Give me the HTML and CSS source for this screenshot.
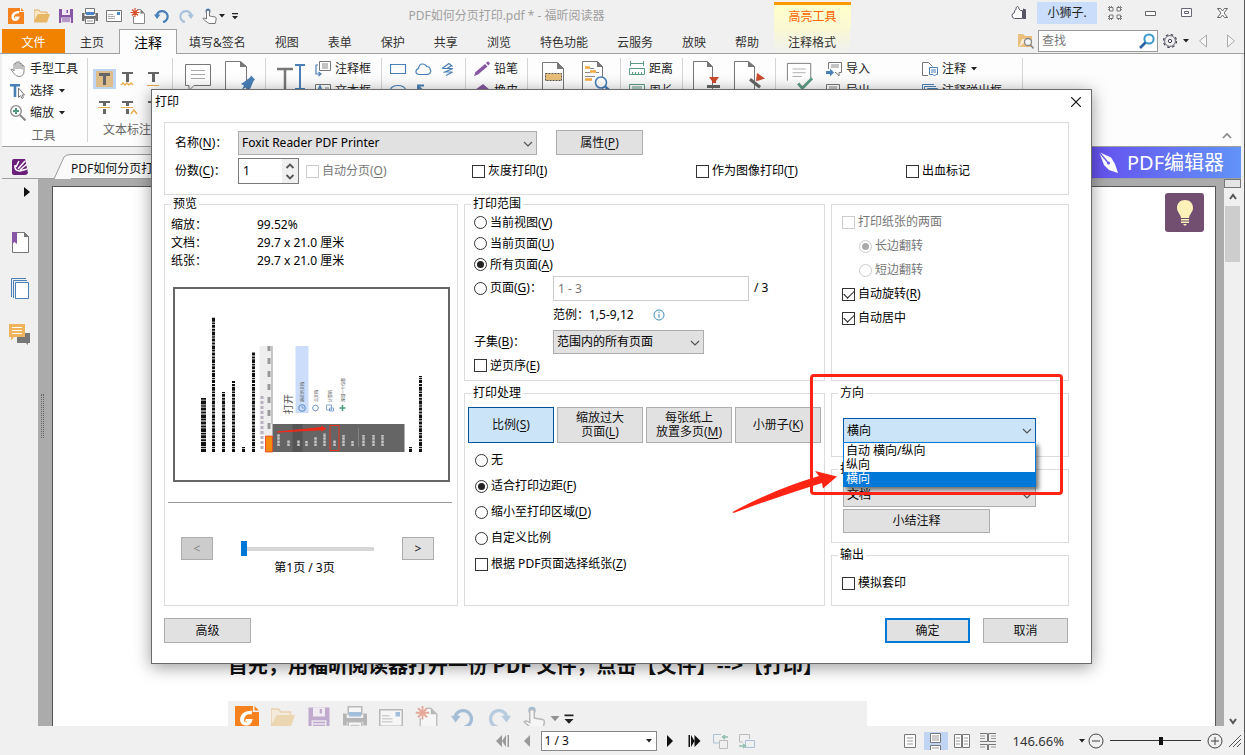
FILE: index.html
```html
<!DOCTYPE html>
<html lang="zh-CN">
<head>
<meta charset="utf-8">
<title>PDF如何分页打印.pdf * - 福昕阅读器</title>
<link rel="stylesheet" href="styles.css">
</head>
<body>
<svg class="defs" aria-hidden="true">
  <symbol id="i-logo" viewBox="0 0 16 16"><path d="M0 0h12v4h4v12H0z" fill="#f5821f"/><path d="M13 0l3 3h-3z" fill="#f5821f"/><path d="M11.6 3.2C7 2.600 3.400 5.200 3.400 9c0 2.500 1.600 4 4 4 2.200 0 3.800-1.400 4.400-4.400H7.200L6.600 10.400h1.800c-1.600 1-2.700.2-2.300-1.800C6.600 6 8.400 5 11 5.600z" fill="#fff"/></symbol>
  <symbol id="i-folder" viewBox="0 0 16 16"><path d="M0 14V2h5l1.500 2H13v3H4z" fill="#fbe6c4" stroke="#dfae62"/><path d="M0 14.500L4 6h12l-3 8.500z" fill="#e8b765"/></symbol>
  <symbol id="i-save" viewBox="0 0 16 16"><path d="M1 1h14v14H1z" fill="#8757a3"/><path d="M4 1h8v6H4z" fill="#f0e8f5"/><path d="M8.500 2H10v3H8.500z" fill="#8757a3"/><path d="M3 9.500h10V15H3z" fill="#fff" opacity=".8"/><path d="M4 11h8M4 13h8" stroke="#8757a3"/></symbol>
  <symbol id="i-print" viewBox="0 0 16 16"><path d="M3.500 6V.5h9V6" fill="#fff" stroke="#777"/><path d="M0 5h2.500v3h11V5H16v8h-2.500v-2.500h-11V13H0z" fill="#6f6f6f"/><path d="M4 4h8v3H4z" fill="#4a86c5"/><path d="M3.500 10.500h9v5h-9z" fill="#fff" stroke="#777"/><path d="M5 13h6" stroke="#999"/></symbol>
  <symbol id="i-mail" viewBox="0 0 16 16"><path d="M.5 2.500h15v11H.5z" fill="#fff" stroke="#777"/><path d="M2 6.500h5M2 8.500h7M2 10.500h7" stroke="#aaa"/><path d="M11 4h3v3h-3z" fill="#4a86c5"/></symbol>
  <symbol id="i-new" viewBox="0 0 16 16"><path d="M3.500 8v7.500h11v-10l-4-4H8" fill="#fff" stroke="#888"/><path d="M10.500 1.500v4h4z" fill="#777"/><path d="M5 0v9M.5 4.500h9M2 1.500l6 6M8 1.500l-6 6" stroke="#d8512f" stroke-width="1.200"/></symbol>
  <symbol id="i-undo" viewBox="0 0 16 16"><path d="M3 9V6.500A5.500 5.500 0 1 1 9 14" fill="none" stroke="#4a80b8" stroke-width="2.200"/><path d="M0 6.500h6.500L3 11z" fill="#4a80b8"/></symbol>
  <symbol id="i-redo" viewBox="0 0 16 16"><path d="M13 9V6.500A5.500 5.500 0 1 0 7 14" fill="none" stroke="#a9c2dc" stroke-width="2.200"/><path d="M16 6.500H9.500L13 11z" fill="#a9c2dc"/></symbol>
  <symbol id="i-touch" viewBox="0 0 16 16"><circle cx="6" cy="3" r="2.500" fill="#4a80b8"/><path d="M4.500 11V3q1.500-1.500 3 0v5l5.500 1q1.500.3 1.200 2l-1 4.500h-6L3.500 13 .8 10.500q1-1.200 3.700.5z" fill="#fff" stroke="#777"/></symbol>
  <symbol id="i-caret" viewBox="0 0 8 8"><path d="M1 2h6L4 5.500z" fill="#222"/></symbol>
  <symbol id="i-more" viewBox="0 0 8 8"><path d="M1 1h6v1.200H1zM1 4h6L4 7.200z" fill="#222"/></symbol>
  <symbol id="i-chevron" viewBox="0 0 10 10"><path d="M1 3l4 4 4-4" fill="none" stroke="#555" stroke-width="1.200"/></symbol>
  <symbol id="i-page" viewBox="0 0 24 30"><path d="M1.500 29V1.500h15l6 6V29" fill="#fdfdfd" stroke="#777"/><path d="M16 1v7h7z" fill="#777"/></symbol>
</svg>

<div class="app">
  <header class="titlebar">
    <nav class="quick" aria-label="快速访问">
      <svg class="ic quick-logo"><use href="#i-logo"/></svg>
      <svg class="ic"><use href="#i-folder"/></svg>
      <svg class="ic"><use href="#i-save"/></svg>
      <svg class="ic"><use href="#i-print"/></svg>
      <svg class="ic"><use href="#i-mail"/></svg>
      <svg class="ic"><use href="#i-new"/></svg>
      <svg class="ic"><use href="#i-undo"/></svg>
      <svg class="ic"><use href="#i-redo"/></svg>
      <svg class="ic"><use href="#i-touch"/></svg>
      <svg class="ic-s"><use href="#i-caret"/></svg>
      <svg class="ic-s quick-more"><use href="#i-more"/></svg>
    </nav>
    <div class="doc-title">PDF如何分页打印.pdf * - 福昕阅读器</div>
    <div class="context-title">高亮工具</div>
    <div class="window-tools">
      <svg class="ic" viewBox="0 0 16 16"><path d="M11.500 5.500v8H3.500q-2.500-.5-2.500-3 0-2.300 2.500-2.800Q3 5 5 4.500 4.500 2 6.500 1.500 8 2 8 4l1.500 1.500z" fill="#fff" stroke="#556"/><path d="M12 3.500l3 1V14h-3z" fill="#556"/></svg>
      <button class="user">小狮子.</button>
      <svg class="ic" viewBox="0 0 16 16" fill="none" stroke="#777"><path d="M2.500 6V2.500H6V6zM10 6V2.500h3.500V6zM2.500 13.500V10H6v3.500zM10 13.500V10h3.500v3.500z"/><path d="M1.500 5V1.500H5M11 1.500h3.500V5M1.500 11v3.500H5M11 14.500h3.500V11" stroke-dasharray="1 1"/></svg>
      <svg class="ic win-first" viewBox="0 0 16 16"><path d="M2.500 6.500h10v4h-10z" fill="#fff" stroke="#666"/></svg>
      <svg class="ic win" viewBox="0 0 16 16"><path d="M2.500 3.500h10v8h-10z" fill="#fff" stroke="#667"/><path d="M5.500 6.500h4v2h-4z" fill="none" stroke="#667"/></svg>
      <svg class="ic win" viewBox="0 0 16 16"><path d="M2.500 3.500h3l2 2.500 2-2.500h3L9 8l3.500 4.500h-3L7.500 10l-2 2.500h-3L6 8z" fill="#fff" stroke="#666"/></svg>
    </div>
  </header>

  <div class="tabs">
    <button class="tab tab-file">文件</button>
    <button class="tab">主页</button>
    <button class="tab tab-active">注释</button>
    <button class="tab tab-after">填写&amp;签名</button>
    <button class="tab">视图</button>
    <button class="tab">表单</button>
    <button class="tab">保护</button>
    <button class="tab">共享</button>
    <button class="tab">浏览</button>
    <button class="tab">特色功能</button>
    <button class="tab">云服务</button>
    <button class="tab">放映</button>
    <button class="tab">帮助</button>
    <button class="tab tab-context">注释格式</button>
    <div class="search-area">
      <svg class="ic" viewBox="0 0 16 16"><path d="M0 1h5l2 2h7v11H0z" fill="#eabf7c"/><path d="M1 14L4 6h7" fill="#fff" opacity=".7"/><circle cx="10" cy="9" r="3.500" fill="#f5f5f5" stroke="#888" stroke-width="1.300"/><path d="M12.500 12l3 3.500" stroke="#888" stroke-width="1.600"/></svg>
      <div class="search">
        <input type="text" aria-label="查找" placeholder="查找">
        <svg class="ic" viewBox="0 0 16 16"><circle cx="10" cy="6" r="4.600" fill="#fff" stroke="#3c9ac8" stroke-width="2"/><path d="M6.500 9.500L1 15" stroke="#2d62a3" stroke-width="2.600"/></svg>
      </div>
      <svg class="ic" viewBox="0 0 16 16" fill="none" stroke="#445"><circle cx="8" cy="8" r="6.500" stroke-width="1.200" stroke-dasharray="2.600 2.500"/><circle cx="8" cy="8" r="5.400" stroke-width=".8"/><circle cx="8" cy="8" r="1.700"/></svg>
      <svg class="ic-s"><use href="#i-caret"/></svg>
      <svg class="step" viewBox="0 0 10 16"><path d="M8.500 2v12L1.500 8z" fill="#f8f8f8" stroke="#aaa"/></svg>
      <svg class="step step-next" viewBox="0 0 10 16"><path d="M1.500 2v12l7-6z" fill="#f8f8f8" stroke="#aaa"/></svg>
    </div>
  </div>

  <section class="ribbon" aria-label="注释">
    <div class="rgroup g-tools">
      <div class="rrow"><svg class="ic" viewBox="0 0 16 16"><path d="M4 10V3q1-1 2 0V1.500q1-1.300 2 0V1q1.200-1 2 .5V3q1-1 2 0v2q1-1 2 0v5q0 5.500-5 5.500-3 0-5-3L1 8.500q1-1.500 3 1.500zM6 3v5M8 1.500V8M10 2v6M12 4v4.500" fill="#fff" stroke="#888"/></svg>手型工具</div>
      <div class="rrow"><svg class="ic" viewBox="0 0 16 16"><path d="M0 1h10v2.500H6.300V14H3.700V3.500H0z" fill="#4a80b8"/><path d="M8.500 5v9.500l2-2 1.500 3 1.500-1-1.500-2.500h2.500z" fill="#fff" stroke="#777"/></svg>选择<svg class="ic-s"><use href="#i-caret"/></svg></div>
      <div class="rrow"><svg class="ic" viewBox="0 0 16 16"><circle cx="6" cy="6" r="5.300" fill="#fff" stroke="#888" stroke-width="1.300"/><path d="M6 3v6M3 6h6" stroke="#4d9a7e" stroke-width="2"/><path d="M10 10l5.500 5.500" stroke="#888" stroke-width="2"/></svg>缩放<svg class="ic-s"><use href="#i-caret"/></svg></div>
      <div class="rlabel">工具</div>
    </div>
    <div class="rgroup g-text">
      <svg class="text-tools" viewBox="0 0 78 54"><path d="M0 0h23v20H0z" fill="#bfd3f2"/><path d="M3 2h17v16H3z" fill="#dfbd8b"/><path d="M6 4h11v3h-4v9h-3V7H6zM29 3h11v2h-4v8h-3V5h-4zM55 3h11v2h-4v8h-3V5h-4zM6 32h11v2h-4v3h-3v-3H6zM10 40h3v5h-3zM29 32h11v2h-4v3h-3v-3h-4zM33 40h3v5h-3zM55 32h11v2h-4v10h-3V34h-4z" fill="#666"/><path d="M54 16.500h12M5 38.500h12M28 38.500h12" stroke="#e8ad50" stroke-width="1.200"/><path d="M28 16l2-2 2 2 2-2 2 2 2-2 2 2M38 45l3-4 3 4" fill="none" stroke="#e8ad50" stroke-width="1.400"/></svg>
      <div class="rlabel">文本标注</div>
    </div>
    <div class="rgroup g-pair">
      <svg class="big" viewBox="0 0 28 30"><path d="M1.500 3.500h25v21H10l-5 5v-5H1.500z" fill="#fff" stroke="#777"/><path d="M7 9.500h14M7 13.500h14M7 17.500h14" stroke="#aaa"/></svg>
      <svg class="big big-2" viewBox="0 0 30 30"><path d="M.5 29V.5h15l6 5V29" fill="#fff" stroke="#777"/><path d="M15 0v6h7z" fill="#777"/><path d="M16 23l3-2 6-4.500 1-2 4 4-1.500 1.500-3 7-1.500 2.500-3-3-4 2 2-4z" fill="#4a80b8"/></svg>
    </div>
    <div class="rgroup g-type">
      <svg class="big" viewBox="0 0 30 30"><path d="M1 8h16M9 8v22" stroke="#777" stroke-width="2.500" fill="none"/><path d="M19 4h10M24 4v23M19 28h10" stroke="#4a80b8" stroke-width="2" fill="none"/></svg>
      <div class="rstack">
        <div class="rrow"><svg class="ic" viewBox="0 0 16 16"><path d="M4.500 .5h11v9h-11z" fill="#fff" stroke="#777"/><path d="M7 3h6M7 5h6M7 7h6" stroke="#888"/><path d="M3 4H1v9h4M3.500 11l2.500 2-2.500 2" fill="none" stroke="#4a80b8" stroke-width="1.200"/></svg>注释框</div>
        <div class="rrow"><svg class="ic" viewBox="0 0 16 16"><path d="M.5 1.500h15v13H.5z" fill="#fff" stroke="#777"/><path d="M2 10l3-7 3 7M3 8h4" stroke="#4a80b8" stroke-width="1.600" fill="none"/><path d="M10 5h4M10 7h4" stroke="#888"/></svg>文本框</div>
      </div>
    </div>
    <div class="rgroup g-shape">
      <svg class="shapes" viewBox="0 0 66 32" fill="none" stroke="#4a80b8" stroke-width="1.200"><path d="M.5 1.500h15v9H.5z"/><path d="M29 11.500q-3.500-.5-3-3.500.5-2 2.500-2.300Q29 1 32.500 1q3 0 4 2.500 3.500 0 3.500 2.500 2 3-1 5-1.500.5-2.500.5z"/><path d="M52 5.500L59 .5 62.500 3.500M52 5.500h11L53.500 9.500M55 9h7.500L56 12.500M57 5.500L61 3"/><ellipse cx="8" cy="27" rx="7.500" ry="4.500"/><path d="M27 22.500h7M28 22v6M28 23l7 7" stroke-width="2"/></svg>
    </div>
    <div class="rgroup g-pen">
      <div class="rstack">
        <div class="rrow"><svg class="ic" viewBox="0 0 16 16"><path d="M0 15l1.500-4L11 3l2.500 2.500L4 13.500zM12 2l2-1.700 2 2L14.500 4.500z" fill="#8757a3"/></svg>铅笔</div>
        <div class="rrow"><svg class="ic" viewBox="0 0 16 16"><path d="M1 7l8-6 7 6-7 8z" fill="#8757a3"/></svg>橡皮</div>
      </div>
    </div>
    <div class="rgroup g-pair">
      <svg class="big" viewBox="0 0 24 30"><use href="#i-page"/><path d="M4.500 12.500h16v7h-16z" fill="#e8bf78" stroke="#555" stroke-dasharray="2 1"/></svg>
      <svg class="big big-3" viewBox="0 0 28 30"><path d="M.5 29V.5h15l5 5V29" fill="#fff" stroke="#777"/><path d="M15 0v6h6z" fill="#777"/><path d="M3 6.500h5M8 10.500h6M3 18.500h7" stroke="#f0a840" stroke-width="2.500"/><path d="M8 7.500h4M3 11.500h5M14 11.500h3M3 15.500h10" stroke="#888"/><circle cx="19" cy="21.500" r="5.500" fill="#fff" stroke="#4a80b8" stroke-width="1.600"/><path d="M23 25.500l5 4.500" stroke="#4a80b8" stroke-width="2.500"/></svg>
    </div>
    <div class="rgroup g-measure">
      <div class="rstack">
        <div class="rrow"><svg class="ic" viewBox="0 0 16 16" fill="none" stroke="#5d9b83"><path d="M1.500 0v5M14.500 0v5M2 2.500h12M.5 7.500h15v6H.5zM3.500 11v2M6.500 11v2M9.500 11v2M12.500 11v2"/></svg>距离</div>
        <div class="rrow"><svg class="ic" viewBox="0 0 16 16" fill="none" stroke="#5d9b83"><path d="M.5 1.500h15v13H.5zM3 4h10M3 6h10"/></svg>周长</div>
      </div>
    </div>
    <div class="rgroup g-stamp">
      <svg class="big" viewBox="0 0 28 30"><path d="M1.500 29V.5h14l5 5V29" fill="#fff" stroke="#777"/><path d="M15 0v6h6z" fill="#777"/><path d="M17 16h10l-3 4v2h-4v-2z" fill="#cc4a2c"/><path d="M15 24h13v3H15z" fill="#666"/><path d="M15 28.500h13V30H15z" fill="#cc4a2c"/></svg>
      <svg class="big big-4" viewBox="0 0 32 30"><path d="M1.500 29V.5h14l6 5V29" fill="#fff" stroke="#777"/><path d="M15 0v6h7z" fill="#777"/><path d="M24 12l8 5.500-6 2-3 .5z" fill="#cc4a2c"/><path d="M18 17l10 8-2 2.500-10-8z" fill="#666"/><path d="M15 28.500h13V30H15z" fill="#cc4a2c"/></svg>
    </div>
    <div class="rgroup g-manage">
      <svg class="big" viewBox="0 0 30 30"><path d="M1.500 20V1.500h25v16" fill="#fff" stroke="#777"/><path d="M7 7.500h14M7 11.500h14M7 15.500h10" stroke="#aaa"/><path d="M13 23l4.500 5L28 17.500" fill="none" stroke="#5d9b83" stroke-width="3"/></svg>
      <div class="rstack rstack-io">
        <div class="rrow"><svg class="ic" viewBox="0 0 16 16"><path d="M2.500 8V1.500h13v10H13V15l-3-3.500H9" fill="#fff" stroke="#777"/><path d="M5 4h8M5 6h8" stroke="#888"/><path d="M0 10h4V7.500l4 4-4 4V13H0z" fill="#4a80b8"/></svg>导入</div>
        <div class="rrow"><svg class="ic" viewBox="0 0 16 16"><path d="M.5 1.500h13v10H.5z" fill="#fff" stroke="#777"/><path d="M3 4h8M3 6h8" stroke="#888"/></svg>导出<svg class="ic-s"><use href="#i-caret"/></svg></div>
      </div>
      <div class="rstack">
        <div class="rrow"><svg class="ic" viewBox="0 0 16 16"><path d="M6 14.500H.5v-13h6l4 4" fill="#fff" stroke="#777"/><path d="M7.500 6.500h8v7H14L12.500 15 11 13.500H7.500z" fill="#fff" stroke="#4a80b8"/><path d="M9 9h5M9 11h5" stroke="#4a80b8"/></svg>注释<svg class="ic-s"><use href="#i-caret"/></svg></div>
        <div class="rrow"><svg class="ic" viewBox="0 0 16 16"><path d="M.5 15V1.500H12M2.500 15V3.500H14M5.500 15V5.500h10V15" fill="none" stroke="#4a80b8"/></svg>注释弹出框<svg class="ic-s"><use href="#i-caret"/></svg></div>
      </div>
    </div>
    <svg class="collapse" viewBox="0 0 10 10"><path d="M1 7l4-4 4 4" fill="none" stroke="#888" stroke-width="1.600"/></svg>
  </section>

  <div class="doctabs">
    <svg class="brand" viewBox="0 0 18 18"><path d="M3 1h11l3 14q-1 2-3 2H3q-2 0-2-2V3q0-2 2-2z" fill="#6a1f78"/><path d="M5 9l3-6M7 11l7-8M9 12l7-6M4 7q-1 6 5 6l7-2" stroke="#fff" stroke-width="1.500" fill="none"/></svg>
    <div class="doctab">
      <svg class="slant" viewBox="0 0 17 25" preserveAspectRatio="none"><path d="M0 25L10 3Q12 0 17 .5V25z" fill="#fafafa"/><path d="M0 25L10 3Q12 .5 17 .5" fill="none" stroke="#999"/></svg>
      <span class="doctab-name">PDF如何分页打印.pdf *</span>
    </div>
    <a class="banner" href="#editor">
      <svg class="nib" viewBox="0 0 22 24"><path d="M1 1l12 5.500 4 6.500 3 9-9-3-5-5z" fill="#fff"/><path d="M1 1l9 10.500" stroke="#6553ee" stroke-width="1.200"/><circle cx="10.500" cy="12" r="1.500" fill="#6553ee"/></svg>
      PDF编辑器
    </a>
  </div>

  <main class="work">
    <aside class="side">
      <svg class="side-arrow" viewBox="0 0 6 10"><path d="M0 0l6 5-6 5z" fill="#111"/></svg>
      <svg class="side-ic" viewBox="0 0 22 24"><path d="M3.500 1.500h12l4 4v16h-16z" fill="#fff" stroke="#777"/><path d="M15 1v5h5z" fill="#777"/><path d="M3 1h5v12l-2.500-2L3 13z" fill="#8757a3"/></svg>
      <svg class="side-ic" viewBox="0 0 22 24"><path d="M2.500 20V1.500H17M4.500 21V3.500H18" fill="none" stroke="#4a80b8"/><path d="M6.500 5.500h13v16h-13z" fill="#fff" stroke="#4a80b8"/></svg>
      <svg class="side-ic" viewBox="0 0 22 24"><path d="M8 10h13v10h-2v2l-2-2H8z" fill="#777"/><path d="M0 1h16v13H5l-3 3.500V14H0z" fill="#efb35b"/><path d="M3 4.500h10M3 7.500h10M3 10.500h10" stroke="#fff"/></svg>
    </aside>
    <div class="viewport">
      <div class="grip"></div>
      <article class="page">
        <div class="tip"><svg viewBox="0 0 20 26"><path d="M10 0c5 0 8 3.500 8 8 0 4-3.500 6-4 10H6C5.500 14 2 12 2 8c0-4.500 3-8 8-8zM6 19h8v1.500H6zM6 21.500h8V23H6zM8 24h4l-2 2z" fill="#fdf0b8"/></svg></div>
        <p class="line">首先，用福昕阅读器打开一份 PDF 文件，点击【文件】--&gt;【打印】</p>
        <div class="shot">
          <svg class="shot-ic shot-logo"><use href="#i-logo"/></svg>
          <svg class="shot-ic"><use href="#i-folder"/></svg>
          <svg class="shot-ic"><use href="#i-save"/></svg>
          <svg class="shot-ic"><use href="#i-print"/></svg>
          <svg class="shot-ic"><use href="#i-mail"/></svg>
          <svg class="shot-ic"><use href="#i-new"/></svg>
          <svg class="shot-ic"><use href="#i-undo"/></svg>
          <svg class="shot-ic shot-redo"><use href="#i-redo"/></svg>
          <svg class="shot-ic"><use href="#i-touch"/></svg>
          <svg class="shot-s shot-ic"><use href="#i-caret"/></svg>
          <svg class="shot-s"><use href="#i-more"/></svg>
        </div>
      </article>
    </div>
    <div class="scroll">
      <div class="split"></div>
      <svg class="sarrow" viewBox="0 0 10 10"><path d="M2 7l3-4 3 4" fill="none" stroke="#555" stroke-width="2"/></svg>
      <div class="thumb"></div>
      <svg class="sarrow sarrow-down" viewBox="0 0 10 10"><path d="M2 3l3 4 3-4" fill="none" stroke="#555" stroke-width="2"/></svg>
    </div>
  </main>

  <footer class="status">
    <div class="pager">
      <svg class="nav" viewBox="0 0 14 14"><path d="M6 1v12L0 7zM10 1v12L6 7zM11.500 1H13v12h-1.500z" fill="#999"/></svg>
      <svg class="nav" viewBox="0 0 14 14"><path d="M10 1v12L4 7z" fill="#999"/></svg>
      <span class="combo combo-page">
        <select aria-label="页码"><option>1 / 3</option></select>
        <svg class="ic-s"><use href="#i-caret"/></svg>
      </span>
      <svg class="nav" viewBox="0 0 14 14"><path d="M4 1v12l6-6z" fill="#111"/></svg>
      <svg class="nav nav-last" viewBox="0 0 14 14"><path d="M1.500 1H3v12H1.500zM4 1l3.500 6L4 13zM7.500 1l6 6-6 6z" fill="#111"/></svg>
      <svg class="ic" viewBox="0 0 16 16" fill="none"><path d="M7 10H.5V1.500H8" stroke="#aac0da"/><path d="M6.500 7.500h8v8h-8z" stroke="#bbb"/><path d="M15 4h-5M12 2L9.500 4 12 6" stroke="#8fc0ac" stroke-width="1.400"/></svg>
      <svg class="ic" viewBox="0 0 16 16" fill="none"><path d="M4 9H.5V1.500h10V6" stroke="#bbb"/><path d="M6.500 7.500h9v7h-9z" stroke="#aac0da"/><path d="M0 13h6M4 11l2.500 2L4 15" stroke="#8fc0ac" stroke-width="1.400"/></svg>
    </div>
    <div class="views">
      <svg class="view" viewBox="0 0 24 18"><path d="M6.500 2.500h11v13h-11z" fill="#fff" stroke="#777"/><path d="M9 6h6M9 9h6M9 12h6" stroke="#999"/></svg>
      <svg class="view view-on" viewBox="0 0 24 18"><path d="M6.500 1.500h10v9h-10zM6.500 18v-4.500h10V18" fill="#fff" stroke="#777"/><path d="M8 4h7M8 6h7M8 8h7M8 16h7" stroke="#999"/></svg>
      <svg class="view" viewBox="0 0 24 18"><path d="M4.500 2.500h7v13h-7zM12.500 2.500h7v13h-7z" fill="#fff" stroke="#777"/><path d="M6 6h4M6 9h4M6 12h4M14 6h4M14 9h4M14 12h4" stroke="#999"/></svg>
      <svg class="view" viewBox="0 0 24 18"><path d="M4 1.500h7.500v8H4M20 1.500h-7.500v8H20M4 12.500h7.500V18M20 12.500h-7.500V18" fill="none" stroke="#777"/><path d="M4 4h5M4 6.500h5M15 4h5M15 6.500h5M4 15h5M15 15h5" stroke="#999"/></svg>
      <button class="zoom">146.66%<svg class="ic-s"><use href="#i-caret"/></svg></button>
      <svg class="ic" viewBox="0 0 16 16" fill="none" stroke="#444"><circle cx="8" cy="8" r="7"/><path d="M4 8h8"/></svg>
      <input class="zoom-range" type="range" min="0" max="100" value="56" aria-label="缩放">
      <svg class="ic" viewBox="0 0 16 16" fill="none" stroke="#444"><circle cx="8" cy="8" r="7"/><path d="M4 8h8M8 4v8"/></svg>
      <svg class="size-grip" viewBox="0 0 12 12"><path d="M0 12L12 0M4 12l8-8M8 12l4-4" stroke="#555"/></svg>
    </div>
  </footer>
</div>

<div class="dialog" role="dialog" aria-label="打印">
  <div class="dlg-title"><span>打印</span>
    <button class="close" aria-label="关闭"><svg viewBox="0 0 10 10"><path d="M0 0l10 10M10 0L0 10" stroke="#111" stroke-width="1.200"/></svg></button>
  </div>

  <section class="box printer">
    <div class="row">
      <label class="key" for="printer">名称(<u>N</u>)：</label>
      <span class="combo combo-printer"><select id="printer"><option>Foxit Reader PDF Printer</option></select><svg class="chev"><use href="#i-chevron"/></svg></span>
      <button class="btn">属性(<u>P</u>)</button>
    </div>
    <div class="row row-copies">
      <label class="key" for="copies">份数(<u>C</u>)：</label>
      <span class="spin"><input id="copies" type="text" value="1"><svg viewBox="0 0 16 24"><path d="M0 0h16v24H0z" fill="#f0f0f0"/><path d="M4.500 9L8 5.500 11.500 9M4.500 16L8 19.500l3.500-3.500" fill="none" stroke="#555" stroke-width="1.800"/></svg></span>
      <label class="opt c-collate off"><input type="checkbox" disabled>自动分页(<u>O</u>)</label>
      <label class="opt c-gray"><input type="checkbox">灰度打印(<u>I</u>)</label>
      <label class="opt c-image"><input type="checkbox">作为图像打印(<u>T</u>)</label>
      <label class="opt"><input type="checkbox">出血标记</label>
    </div>
  </section>

  <div class="cols">
    <fieldset class="box preview">
      <legend>预览</legend>
      <dl class="facts">
        <dt>缩放：</dt><dd>99.52%</dd>
        <dt>文档：</dt><dd>29.7 x 21.0 厘米</dd>
        <dt>纸张：</dt><dd>29.7 x 21.0 厘米</dd>
      </dl>
      <div class="sheet">
        <svg viewBox="0 0 272 191">
          <g fill="none" stroke="#111" stroke-dasharray="3 .8 1.500 .7 4 .8 2 1">
            <path d="M28 163v-54" stroke-width="5"/>
            <path d="M38 163V28M48 163v-60M58 163V92M68 163v-5M78 163V63M235 163v-5M245 163V87" stroke-width="3"/>
          </g>
          <path d="M84 57h13v89H84z" fill="#eee"/><path d="M96 57h1v78h-1z" fill="#999"/>
          <path d="M93.500 140V57" stroke="#999" stroke-width="3" stroke-dasharray="6 7"/>
          <path d="M86.500 160v-54" stroke="#b9b0c4" stroke-width="3" stroke-dasharray="3 2"/>
          <path d="M97 135h132v28H97z" fill="#656565"/><path d="M117 135h10v28h-10z" fill="#555"/>
          <path d="M90 147h7v16h-7z" fill="#f58a10" stroke="#e43a20" stroke-width=".8"/>
          <path d="M103 157v-12M113 157v-6M123 157v-6M131 157v-5M140 157v-9M149 157v-13M159 157v-6M168 157v-11M177 157v-5M188 157v-11M198 157v-11M207 157v-11" stroke="#c4c4c4" stroke-width="2.500" stroke-dasharray="2.500 .6"/>
          <path d="M183 139v19" stroke="#999" stroke-width=".6"/>
          <path d="M120 57h13v67h-13z" fill="#cbddfb"/>
          <path d="M154.500 136.500h9v25h-9z" fill="none" stroke="#e43a20"/>
          <path d="M102 143l44-4.500v-1l4.500 2-4.500 2.500v-1.200z" fill="#f02a18" stroke="#f02a18"/>
          <circle cx="126.500" cy="119" r="3.300" fill="none" stroke="#5a8ac5"/><path d="M126.500 117v2h2" fill="none" stroke="#5a8ac5" stroke-width=".7"/>
          <circle cx="140" cy="119" r="2.800" fill="none" stroke="#6a93c5"/><path d="M151 116h5v5h-5zM154 119h4v3h-4z" fill="#fff" stroke="#6a93c5" stroke-width=".8"/><path d="M167 116v6M164 119h6" stroke="#4d9a7e" stroke-width="1.500"/>
          <text class="t-open" transform="translate(116 125) rotate(-90)">打开</text>
          <g class="t-tiny">
            <text transform="translate(128 113) rotate(-90)">最近的文档</text>
            <text transform="translate(142 113) rotate(-90)">云文档</text>
            <text transform="translate(156 113) rotate(-90)">计算机</text>
            <text transform="translate(169 113) rotate(-90)">添加一个位置</text>
          </g>
        </svg>
      </div>
      <hr>
      <div class="pages">
        <button class="btn btn-step" disabled>&lt;</button>
        <div class="slide">
          <input type="range" min="1" max="3" value="1" aria-label="预览页">
        </div>
        <button class="btn btn-step">&gt;</button>
      </div>
      <div class="page-no">第1页 / 3页</div>
    </fieldset>

    <div class="col">
      <fieldset class="box range">
        <legend>打印范围</legend>
        <label class="opt"><input type="radio" name="range">当前视图(<u>V</u>)</label>
        <label class="opt"><input type="radio" name="range">当前页面(<u>U</u>)</label>
        <label class="opt"><input type="radio" name="range" checked>所有页面(<u>A</u>)</label>
        <div class="pair">
          <label class="opt"><input type="radio" name="range">页面(<u>G</u>)：</label>
          <input class="pages-in" type="text" value="1 - 3" aria-label="页面范围">
          <span>/ 3</span>
        </div>
        <div class="pair pair-hint"><span></span><span>范例：1,5-9,12</span>
          <svg class="info" viewBox="0 0 12 12"><circle cx="6" cy="6" r="5" fill="none" stroke="#3d8fc0"/><path d="M5.500 2.800h1v1.200h-1zM5.500 5h1v4h-1z" fill="#3d8fc0"/></svg></div>
        <div class="pair">
          <label for="subset">子集(<u>B</u>)：</label>
          <span class="combo combo-subset"><select id="subset"><option>范围内的所有页面</option></select><svg class="chev"><use href="#i-chevron"/></svg></span>
        </div>
        <label class="opt"><input type="checkbox">逆页序(<u>E</u>)</label>
      </fieldset>
      <fieldset class="box process">
        <legend>打印处理</legend>
        <div class="modes">
          <button class="btn btn-mode btn-on">比例(<u>S</u>)</button>
          <button class="btn btn-mode">缩放过大<br>页面(<u>L</u>)</button>
          <button class="btn btn-mode">每张纸上<br>放置多页(<u>M</u>)</button>
          <button class="btn btn-mode">小册子(<u>K</u>)</button>
        </div>
        <div class="scales">
          <label class="opt"><input type="radio" name="scale">无</label>
          <label class="opt"><input type="radio" name="scale" checked>适合打印边距(<u>F</u>)</label>
          <label class="opt"><input type="radio" name="scale">缩小至打印区域(<u>D</u>)</label>
          <label class="opt"><input type="radio" name="scale">自定义比例</label>
          <label class="opt"><input type="checkbox">根据 PDF页面选择纸张(<u>Z</u>)</label>
        </div>
      </fieldset>
    </div>

    <div class="col">
      <section class="box duplex">
        <label class="opt off"><input type="checkbox" disabled>打印纸张的两面</label>
        <label class="opt off sub"><input type="radio" name="flip" disabled checked>长边翻转</label>
        <label class="opt off sub"><input type="radio" name="flip" disabled>短边翻转</label>
        <label class="opt"><input type="checkbox" checked>自动旋转(<u>R</u>)</label>
        <label class="opt"><input type="checkbox" checked>自动居中</label>
      </section>
      <div class="orient-wrap">
        <fieldset class="box orient">
          <legend>方向</legend>
          <div class="drop">
            <span class="combo combo-open"><select aria-label="方向"><option>横向</option></select><svg class="chev"><use href="#i-chevron"/></svg></span>
            <ul class="menu">
              <li>自动 横向/纵向</li>
              <li>纵向</li>
              <li class="menu-on">横向</li>
            </ul>
          </div>
        </fieldset>
        <div class="mark"></div>
        <svg class="arrow" viewBox="0 0 106 44"><path d="M.5 41Q40 19 87 5l-4-5 22 5.500-14 12-1-5.500Q48 25 1.500 42z" fill="#ff2414"/></svg>
      </div>
      <fieldset class="box content">
        <legend>打印内容</legend>
        <span class="combo combo-content"><select aria-label="打印内容"><option>文档</option></select><svg class="chev"><use href="#i-chevron"/></svg></span>
        <button class="btn btn-sum">小结注释</button>
      </fieldset>
      <fieldset class="box output">
        <legend>输出</legend>
        <label class="opt"><input type="checkbox">模拟套印</label>
      </fieldset>
    </div>
  </div>

  <div class="actions">
    <button class="btn">高级</button>
    <button class="btn btn-ok">确定</button>
    <button class="btn btn-cancel">取消</button>
  </div>
</div>
</body>
</html>
```

FILE: styles.css
```css
* { box-sizing: border-box; }
html, body { height: 100%; }
body {
  margin: 0;
  overflow: hidden;
  background: #f0f0f0;
  color: #111;
  font: 12px/16px "Noto Sans", "Noto Sans CJK SC", sans-serif;
}
button, input, select { font: inherit; color: inherit; margin: 0; padding: 0; }
button { border: 0; background: none; white-space: nowrap; }
svg { display: block; flex: none; }
u { text-underline-offset: 2px; }
.defs { position: absolute; width: 0; height: 0; }
.ic { width: 16px; height: 16px; }
.ic-s { width: 8px; height: 8px; }

/* application window */
.app {
  display: flex;
  flex-direction: column;
  height: 100vh;
  border-right: 1px solid #5a5a5a;
}

.titlebar { display: flex; height: 29px; flex: none; }
.quick { display: flex; align-items: center; gap: 8px; padding: 2px 0 0 8px; }
.quick-logo { margin-right: 2px; }
.quick .ic-s { margin-left: -8px; }
.quick .quick-more { margin-left: -3px; }
.doc-title { flex: 0 0 541px; padding: 8px 6px 0 0; text-align: center; color: #a0a0a0; }
.context-title {
  flex: 0 0 77px;
  margin: 2px 0 0 -6px;
  padding-top: 4px;
  border-top: 3px solid #ff9900;
  background: linear-gradient(#ffffcc, #f9f8d4);
  color: #ff6600;
  text-align: center;
}
.window-tools { display: flex; align-items: center; gap: 10px; margin-left: auto; padding: 0 13px 3px 0; }
.user { width: 60px; height: 22px; background: #cadefb; color: #222; }
.win-first, .win { margin-left: 10px; }

.tabs {
  display: flex;
  flex: none;
  gap: 1px;
  height: 25px;
  padding-left: 2px;
  border-bottom: 1px solid #a0a0a0;
}
.tab { flex: none; padding: 4px 14px 0; color: #333; }
.tab-file { width: 63px; background: #f08200; color: #fff; }
.tab-active {
  height: 25px;
  padding: 2px 14px 0;
  border: 1px solid #a0a0a0;
  border-bottom: 0;
  background: #fdfdfd;
  color: #000;
  font-size: 14px;
}
.tab-after { margin-left: -3px; }
.tab-context { background: linear-gradient(#f9f8d4, #f0f0f0); }
.search-area { display: flex; align-items: center; gap: 4px; margin-left: auto; padding-right: 8px; }
.search {
  display: flex;
  align-items: center;
  width: 120px;
  height: 22px;
  padding: 0 2px 0 3px;
  border: 1px solid #999;
  background: #fff;
}
.search input { flex: 1; min-width: 0; border: 0; background: none; outline: 0; }
.search input::placeholder { color: #777; }
.step { width: 10px; height: 16px; margin-left: 4px; }
.step-next { margin-left: 14px; }

.ribbon {
  display: flex;
  flex: none;
  height: 93px;
  margin: 0 3px 0 2px;
  padding: 4px 0 0;
  border-bottom: 1px solid #a0a0a0;
  background: #fdfdfd;
}
.rgroup {
  display: flex;
  flex: none;
  height: 84px;
  border-right: 1px solid #d5d5d5;
}
.rrow { display: flex; flex: none; align-items: center; gap: 4px; height: 22px; white-space: nowrap; color: #222; }
.rlabel { flex: none; text-align: center; color: #666; white-space: nowrap; }
.g-tools { flex-direction: column; width: 86px; padding-left: 8px; }
.g-tools .rlabel { margin: 4px 10px 0 0; }
.g-text { flex-direction: column; width: 85px; padding: 11px 0 0 5px; }
.text-tools { width: 78px; height: 54px; }
.g-text .rlabel { margin-top: -1px; padding-left: 10px; text-align: left; }
.g-pair { width: 93px; padding-left: 11px; }
.g-type { width: 116px; padding-left: 10px; }
.g-shape { width: 84px; padding: 5px 0 0 8px; }
.g-pen { width: 62px; padding-left: 8px; }
.g-measure { width: 62px; padding-left: 8px; }
.g-stamp { width: 93px; padding-left: 9px; }
.g-manage { width: 247px; padding-left: 10px; }
.big { width: 28px; height: 30px; margin-top: 3px; }
.big-2 { margin-left: 13px; width: 30px; }
.big-3 { margin-left: 15px; }
.big-4 { margin-left: 13px; width: 32px; }
.g-type .big { width: 30px; }
.g-type .rstack { margin-left: 9px; }
.rstack-io { width: 96px; margin-left: 12px; }
.shapes { width: 66px; height: 32px; }
.collapse { width: 10px; height: 10px; margin: 73px 9px 0 auto; }

.doctabs { display: flex; flex: none; height: 32px; margin: 0 3px 0 2px; border-bottom: 1px solid #a0a0a0; }
.brand { width: 18px; height: 18px; margin: 11px 0 0 9px; }
.doctab { display: flex; margin: 7px 0 0 25px; }
.slant { width: 17px; height: 25px; }
.doctab-name { padding: 6px 40px 0 0; border-top: 1px solid #999; background: #fafafa; }
.banner {
  display: flex;
  align-items: center;
  gap: 7px;
  width: 222px;
  margin-left: auto;
  padding-left: 80px;
  background: linear-gradient(90deg, #6553ee 35%, #6293f8);
  color: #fff;
  font-size: 20px;
  text-decoration: none;
  white-space: nowrap;
}
.nib { width: 22px; height: 24px; margin-left: -1px; }

.work { display: flex; flex: 1; min-height: 0; margin-right: 3px; }
.side { display: flex; flex-direction: column; align-items: center; flex: 0 0 38px; padding: 8px 0 0 2px; }
.side-arrow { width: 6px; height: 10px; margin: 0 0 34px 14px; }
.side-ic { width: 22px; height: 24px; margin-bottom: 22px; }
.viewport { display: flex; align-items: stretch; flex: 1; padding: 7px 8px 0 0; background: #ababab; overflow: hidden; }
.grip { width: 3px; height: 44px; margin: 208px 8px 0 3px; border: dotted #666; border-width: 0 1px; }
.page {
  display: flex;
  flex: 1;
  flex-direction: column;
  padding-left: 175px;
  border: 1px solid #555;
  border-bottom: 0;
  background: #fff;
}
.tip {
  display: flex;
  align-items: center;
  justify-content: center;
  align-self: flex-end;
  width: 39px;
  height: 39px;
  margin: 6px 11px auto 0;
  border-radius: 3px;
  background: #724f70;
}
.tip svg { width: 20px; height: 26px; }
.line {
  margin: 0 0 22px;
  font-family: "Noto Sans CJK SC", sans-serif;
  font-size: 20px;
  line-height: 28px;
  font-weight: bold;
  text-spacing-trim: space-all;
  white-space: nowrap;
}
.shot { display: flex; align-items: flex-start; gap: 12px; width: 639px; height: 25px; padding: 5px 0 0 7px; overflow: hidden; background: #f0f0f0; }
.shot-ic { width: 24px; height: 24px; opacity: .45; }
.shot-logo { opacity: 1; }
.shot-redo { opacity: .8; }
.shot-s { width: 12px; height: 12px; margin: 7px 0 0 -10px; }
.scroll { display: flex; flex-direction: column; align-items: center; width: 17px; background: #f0f0f0; }
.split { width: 17px; height: 9px; border: 1px solid #777; background: #e4e4e4; }
.sarrow { width: 10px; height: 10px; margin: 4px 0; }
.sarrow-down { margin-top: auto; margin-bottom: 0; }
.thumb { width: 15px; height: 56px; background: #cdcdcd; }

.status { display: grid; grid-template-columns: 1fr auto 1fr; align-items: center; flex: none; height: 29px; padding-right: 3px; }
.pager { display: flex; grid-column: 2; align-items: center; gap: 10px; margin-left: 9px; }
.nav { width: 14px; height: 14px; }
.nav-last { margin-right: 2px; }
.views { display: flex; align-items: center; justify-content: flex-end; }
.view { width: 24px; height: 18px; margin-right: 2px; }
.view-on { background: #c0d4f4; }
.zoom { display: flex; align-items: center; gap: 14px; margin: 0 2px 0 11px; font-size: 13px; color: #333; }
.zoom-range { appearance: none; width: 91px; height: 10px; margin: 0 6px; background: linear-gradient(#333, #333) center / 100% 1px no-repeat; }
.zoom-range::-webkit-slider-thumb { appearance: none; width: 4px; height: 8px; background: #111; }
.size-grip { width: 12px; height: 12px; margin-left: 6px; }

/* shared controls */
.combo { position: relative; display: block; height: 24px; }
.combo select {
  appearance: none;
  display: block;
  width: 100%;
  height: 100%;
  padding: 0 20px 0 3px;
  border: 1px solid #adadad;
  border-radius: 0;
  background: #e1e1e1;
  outline: 0;
}
.combo svg { position: absolute; top: 8px; right: 4px; pointer-events: none; }
.chev { width: 10px; height: 10px; }
.combo-page { width: 116px; height: 20px; margin: 0 -4px 0 -3px; }
.combo-page select { border-color: #888; background: #fff; }
.combo-page svg { top: 6px; }

.btn {
  height: 25px;
  min-width: 87px;
  border: 1px solid #adadad;
  background: #e1e1e1;
  color: #111;
}
.btn:disabled { background: #ccc; color: #888; }

.opt { display: flex; align-items: center; white-space: nowrap; }
.opt input {
  appearance: none;
  display: grid;
  place-items: center;
  flex: none;
  width: 13px;
  height: 13px;
  margin-right: 3px;
  border: 1px solid #333;
  background: #fff;
}
.opt input[type="radio"] { border-radius: 50%; }
.opt input[type="radio"]:checked::after { content: ""; width: 7px; height: 7px; border-radius: 50%; background: #222; }
.opt input[type="checkbox"]:checked::after {
  content: "";
  width: 9px;
  height: 5px;
  margin-bottom: 2px;
  border: solid #222;
  border-width: 0 0 1px 1px;
  rotate: -45deg;
}
.off { color: #777; }
.opt input:disabled { border-color: #ccc; }
.opt input[type="radio"]:disabled:checked::after { background: #aaa; }

/* print dialog */
.dialog {
  position: absolute;
  top: 89px;
  left: 151px;
  right: 153px;
  padding: 0 22px 20px 12px;
  border: 1px solid #6b6b6b;
  background: #fff;
  box-shadow: 0 3px 16px rgba(0, 0, 0, .4);
  color: #000;
}
.dlg-title { display: flex; justify-content: space-between; height: 24px; margin: 0 -14px 8px -9px; padding-top: 4px; }
.close { width: 12px; height: 16px; }
.close svg { width: 10px; height: 10px; }
.box { min-width: 0; margin: 0; padding: 0; border: 1px solid #dcdcdc; }
legend { padding: 0 2px; }

.printer { padding: 7px 10px 10px; }
.row { display: flex; align-items: center; height: 25px; }
.row-copies { height: 26px; margin-top: 3px; }
.key { flex: 0 0 63px; }
.combo-printer { width: 299px; margin-right: 19px; }
.spin { display: flex; width: 61px; height: 26px; margin-right: 7px; border: 1px solid #7a7a7a; }
.spin input { flex: 1; min-width: 0; padding-left: 4px; border: 0; outline: 0; }
.spin svg { width: 16px; height: 24px; }
.c-collate { width: 166px; }
.c-gray { width: 224px; }
.c-image { width: 210px; }

.cols { display: grid; grid-template-columns: 294fr 361fr 238fr; gap: 6px; margin-top: 1px; }
.col { display: flex; flex-direction: column; gap: 4px; min-width: 0; }

.preview { padding: 4px 5px 0 6px; }
.facts { display: grid; grid-template-columns: 86px 1fr; margin: 0 0 17px; line-height: 18px; }
.facts dd { margin: 0; }
.sheet { margin: 0 2px; border: 2px solid #666; }
.sheet svg { width: 100%; height: 191px; }
.t-open { font-size: 10px; fill: #555; }
.t-tiny { font-size: 4px; fill: #444; }
.preview hr { margin: 20px 0 0 -3px; border: 0; border-top: 1px solid #999; }
.pages { display: flex; align-items: center; justify-content: space-between; margin: 34px 18px 0 10px; }
.btn-step { min-width: 32px; height: 23px; }
.slide { width: 133px; }
.slide input { appearance: none; display: block; width: 100%; height: 15px; background: linear-gradient(#d6d6d6, #d6d6d6) center / 100% 4px no-repeat; }
.slide input::-webkit-slider-thumb { appearance: none; width: 6px; height: 15px; background: #0078d7; }
.page-no { padding-right: 14px; text-align: center; }

.range { padding: 0 7px 4px 9px; }
.range legend { margin-left: -3px; }
.range .opt { height: 21px; }
.pair { display: grid; grid-template-columns: 79px auto 1fr; align-items: center; height: 26px; }
.pages-in { width: 196px; height: 25px; margin-right: 5px; padding-left: 4px; border: 1px solid #ccc; color: #777; outline: 0; }
.pair-hint { height: 28px; }
.info { width: 12px; height: 12px; margin-left: 19px; }
.combo-subset { width: 151px; }

.process { flex: 1; padding: 6px 3px 0; }
.process legend { margin-left: 3px; }
.modes { display: grid; grid-template-columns: repeat(4, 1fr); gap: 3px; }
.btn-mode { min-width: 0; height: 36px; line-height: 14px; }
.btn-on { border-color: #005499; background: #cce4f7; }
.scales { padding: 4px 0 0 7px; }
.scales .opt { height: 26px; }

.duplex { margin-top: 8px; padding: 5px 10px 50px; }
.duplex .opt { height: 24px; }
.duplex .sub { padding-left: 17px; }
.orient-wrap { position: relative; z-index: 2; }
.orient { padding: 17px 32px 13px 11px; }
.orient legend, .content legend { margin-left: -5px; }
.drop { position: relative; }
.combo-open { height: 25px; }
.combo-open select { border-color: #0057a6; background: #cce4f7; }
.menu {
  position: absolute;
  top: 24px;
  left: 0;
  right: 0;
  margin: 0;
  padding: 1px 0 0;
  border: 1px solid #0078d7;
  background: #fff;
  box-shadow: 3px 3px 4px rgba(0, 0, 0, .5);
  list-style: none;
}
.menu li { height: 14px; padding-left: 2px; line-height: 14px; }
.menu-on { background: #0078d7; color: #fff; }
.mark {
  position: absolute;
  top: -11px;
  left: -21px;
  right: 6px;
  height: 121px;
  border: 3px solid #ff2414;
  border-radius: 4px;
}
.arrow { position: absolute; top: 86px; left: -99px; width: 106px; height: 44px; }
.content { padding: 6px 32px 9px 11px; }
.btn-sum { display: block; width: 147px; height: 24px; margin-top: 2px; }
.output { flex: 1; padding: 12px 10px 14px; }
.output legend { margin-left: -4px; }

.actions { display: flex; margin: 12px 1px 0 0; }
.btn-ok { min-width: 85px; margin: 0 13px 0 auto; border: 2px solid #0078d7; }
.btn-cancel { min-width: 85px; }
```
